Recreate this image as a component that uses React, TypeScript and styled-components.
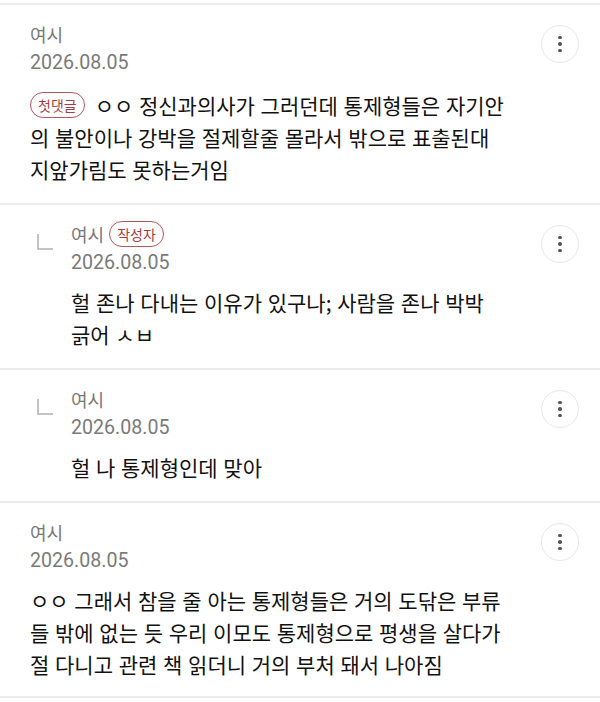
import React from "react";
import styled, { createGlobalStyle } from "styled-components";

type CommentType = {
  name: string;
  date: string;
  lines: string[];
  reply?: boolean;
  author?: boolean;
  first?: boolean;
};

const comments: CommentType[] = [
  {
    name: "여시",
    date: "2026.08.05",
    first: true,
    lines: [
      "ㅇㅇ 정신과의사가 그러던데 통제형들은 자기안",
      "의 불안이나 강박을 절제할줄 몰라서 밖으로 표출된대",
      "지앞가림도 못하는거임",
    ],
  },
  {
    name: "여시",
    date: "2026.08.05",
    reply: true,
    author: true,
    lines: ["헐 존나 다내는 이유가 있구나; 사람을 존나 박박", "긁어 ㅅㅂ"],
  },
  {
    name: "여시",
    date: "2026.08.05",
    reply: true,
    lines: ["헐 나 통제형인데 맞아"],
  },
  {
    name: "여시",
    date: "2026.08.05",
    lines: [
      "ㅇㅇ 그래서 참을 줄 아는 통제형들은 거의 도닦은 부류",
      "들 밖에 없는 듯 우리 이모도 통제형으로 평생을 살다가",
      "절 다니고 관련 책 읽더니 거의 부처 돼서 나아짐",
    ],
  },
];

const GlobalStyle = createGlobalStyle`
  body {
    margin: 0;
    background: #ffffff;
    font-family: "Noto Sans CJK KR", "Noto Sans", sans-serif;
  }
`;

const List = styled.section`
  padding-top: 3px;
`;

const Item = styled.article<{ $reply?: boolean }>`
  display: flex;
  align-items: flex-start;
  padding: 15px 21px 18px ${(p) => (p.$reply ? "37px" : "30px")};
  border-top: 2px solid #ebebeb;
  &:last-child {
    border-bottom: 2px solid #ebebeb;
    padding-bottom: 16px;
  }
`;

const ReplyMark = styled.svg`
  flex-shrink: 0;
  width: 16px;
  height: 16px;
  margin: 14px 18px 0 0;
`;

const Content = styled.div`
  flex: 1;
  min-width: 0;
`;

const NameRow = styled.div`
  display: flex;
  align-items: center;
  gap: 5px;
  height: 27px;
  font-size: 18px;
  color: #777777;
`;

const DateText = styled.div`
  margin-top: 2px;
  font-family: "Roboto", "Noto Sans CJK KR", sans-serif;
  font-size: 19.6px;
  line-height: 28px;
  color: #7a7a7a;
`;

const Body = styled.div<{ $first?: boolean }>`
  margin-top: ${(p) => (p.$first ? "12px" : "9px")};
  font-size: 21px;
  line-height: 32px;
  word-spacing: 1px;
  color: #111111;
  white-space: nowrap;
`;

const Badge = styled.span`
  display: inline-flex;
  align-items: center;
  justify-content: center;
  box-sizing: border-box;
  height: 26px;
  padding: 0 7px;
  border: 1.5px solid #b4575b;
  border-radius: 13px;
  font-size: 14px;
  line-height: 1;
  word-spacing: 0;
  color: #a63c41;
  vertical-align: 3px;
`;

const FirstBadge = styled(Badge)`
  margin-right: 10px;
`;

const MoreButton = styled.button`
  flex-shrink: 0;
  display: flex;
  flex-direction: column;
  align-items: center;
  justify-content: center;
  gap: 3px;
  width: 38px;
  height: 38px;
  margin-top: 5px;
  padding: 0;
  border: 1px solid #e8e8e8;
  border-radius: 50%;
  background: #ffffff;
`;

const Dot = styled.span`
  width: 3.5px;
  height: 3.5px;
  border-radius: 50%;
  background: #555555;
`;

const Comment = ({ c }: { c: CommentType }) => (
  <Item $reply={c.reply}>
    {c.reply && (
      <ReplyMark viewBox="0 0 16 16">
        <path d="M1 0 V15 H16" fill="none" stroke="#b0b0b0" strokeWidth="1.5" />
      </ReplyMark>
    )}
    <Content>
      <NameRow>
        <span>{c.name}</span>
        {c.author && <Badge>작성자</Badge>}
      </NameRow>
      <DateText>{c.date}</DateText>
      <Body $first={c.first}>
        {c.lines.map((line, i) => (
          <div key={i}>
            {i === 0 && c.first && <FirstBadge>첫댓글</FirstBadge>}
            {line}
          </div>
        ))}
      </Body>
    </Content>
    <MoreButton aria-label="더보기">
      <Dot />
      <Dot />
      <Dot />
    </MoreButton>
  </Item>
);

export default function App() {
  return (
    <>
      <GlobalStyle />
      <List>
        {comments.map((c, i) => (
          <Comment c={c} key={i} />
        ))}
      </List>
    </>
  );
}
